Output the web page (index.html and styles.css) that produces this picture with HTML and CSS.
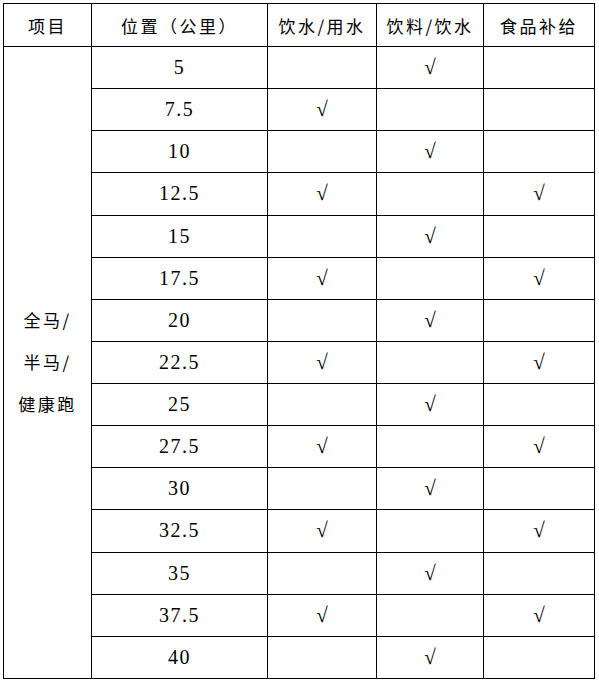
FILE: index.html
```html
<!DOCTYPE html>
<html lang="zh-CN">
<head>
<meta charset="utf-8">
<title>补给站</title>
<link rel="stylesheet" href="styles.css">
</head>
<body>
<table class="supply">
  <colgroup>
    <col class="c-item">
    <col class="c-pos">
    <col class="c-water">
    <col class="c-drink">
    <col class="c-food">
  </colgroup>
  <thead>
    <tr class="head">
      <th class="cjk">项目</th>
      <th class="cjk">位置（公里）</th>
      <th class="cjk">饮水/用水</th>
      <th class="cjk">饮料/饮水</th>
      <th class="cjk">食品补给</th>
    </tr>
  </thead>
  <tbody>
    <tr><td class="cjk item" rowspan="15">全马/<br>半马/<br>健康跑</td><td class="num">5</td><td></td><td class="ck">√</td><td></td></tr>
    <tr><td class="num">7.5</td><td class="ck">√</td><td></td><td></td></tr>
    <tr><td class="num">10</td><td></td><td class="ck">√</td><td></td></tr>
    <tr><td class="num">12.5</td><td class="ck">√</td><td></td><td class="ck">√</td></tr>
    <tr><td class="num">15</td><td></td><td class="ck">√</td><td></td></tr>
    <tr><td class="num">17.5</td><td class="ck">√</td><td></td><td class="ck">√</td></tr>
    <tr><td class="num">20</td><td></td><td class="ck">√</td><td></td></tr>
    <tr><td class="num">22.5</td><td class="ck">√</td><td></td><td class="ck">√</td></tr>
    <tr><td class="num">25</td><td></td><td class="ck">√</td><td></td></tr>
    <tr><td class="num">27.5</td><td class="ck">√</td><td></td><td class="ck">√</td></tr>
    <tr><td class="num">30</td><td></td><td class="ck">√</td><td></td></tr>
    <tr><td class="num">32.5</td><td class="ck">√</td><td></td><td class="ck">√</td></tr>
    <tr><td class="num">35</td><td></td><td class="ck">√</td><td></td></tr>
    <tr><td class="num">37.5</td><td class="ck">√</td><td></td><td class="ck">√</td></tr>
    <tr><td class="num">40</td><td></td><td class="ck">√</td><td></td></tr>
  </tbody>
</table>
</body>
</html>
```
FILE: styles.css
```css
html, body {
  margin: 0;
  padding: 0;
  background: #ffffff;
}

body {
  padding: 3px 0 0 3px;
  color: #000000;
}

.supply {
  border-collapse: collapse;
  table-layout: fixed;
  width: 591px;
}

.c-item { width: 88px; }
.c-pos { width: 176px; }
.c-water { width: 109px; }
.c-drink { width: 107px; }
.c-food { width: 111px; }

.supply th,
.supply td {
  border: 1px solid #000000;
  padding: 0;
  text-align: center;
  vertical-align: middle;
  font-weight: normal;
}

.head th {
  height: 42px;
}

.supply tbody tr {
  height: 42.13px;
}

.cjk {
  font-family: "Noto Sans CJK SC", "Noto Sans", sans-serif;
  font-weight: 300;
  font-size: 17px;
  letter-spacing: 2.5px;
}

.item {
  line-height: 42px;
}

.num {
  font-family: "Liberation Serif", serif;
  font-size: 20px;
  letter-spacing: 1.5px;
}

.ck {
  font-family: "Liberation Serif", "DejaVu Serif", serif;
  font-size: 21px;
}
```
